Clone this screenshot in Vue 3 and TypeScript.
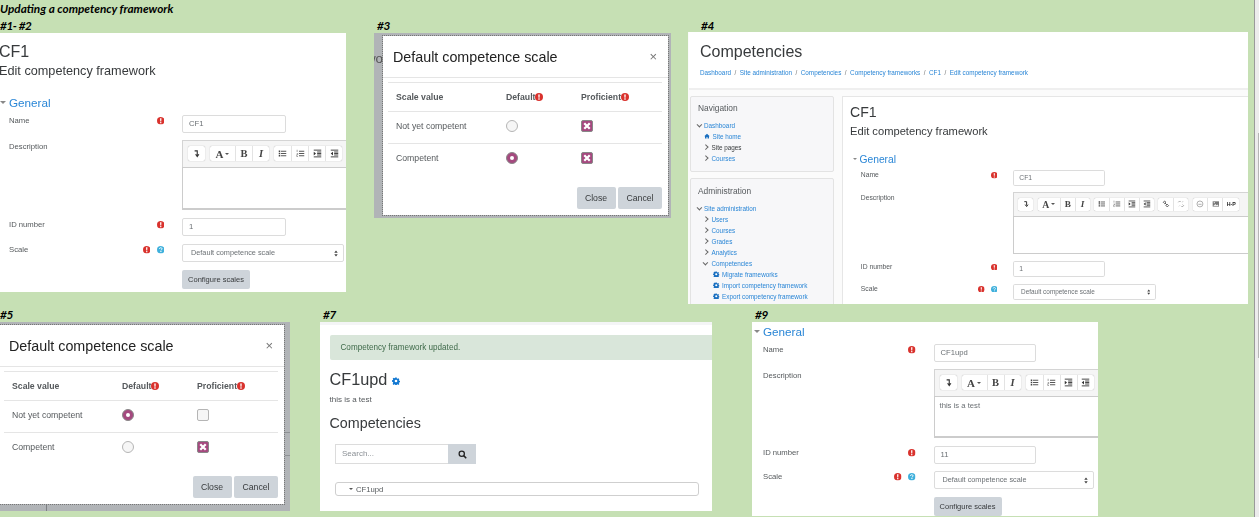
<template>
  <div class="sheet">
    <svg class="defs" width="0" height="0" aria-hidden="true">
      <symbol id="req" viewBox="0 0 16 16">
        <circle cx="8" cy="8" r="8" fill="#d9322d" />
        <path d="M6.5 2.8h3l-.4 6.6H6.9zM6.7 10.7h2.6v2.6H6.7z" fill="#fff" />
      </symbol>
      <symbol id="help" viewBox="0 0 16 16">
        <circle cx="8" cy="8" r="8" fill="#3fb0dc" />
        <path d="M5.2 6.2C5.4 4.4 6.6 3.6 8 3.6c1.6 0 2.8 1 2.8 2.4 0 2-2.4 2-2.4 3.6" fill="none" stroke="#fff" stroke-width="1.9" />
        <path d="M7.1 10.8h2.4v2.2H7.1z" fill="#fff" />
      </symbol>
      <symbol id="gear" viewBox="0 0 16 16">
        <path d="M6.6 1h2.8l.4 2 1.2.5 1.7-1.1 2 2-1.1 1.7.5 1.2 2 .4v2.8l-2 .4-.5 1.2 1.1 1.7-2 2-1.7-1.1-1.2.5-.4 2H6.6l-.4-2-1.2-.5-1.7 1.1-2-2L2.4 11l-.5-1.2-2-.4V6.6l2-.4.5-1.2-1.1-1.7 2-2L4.5 2.4 5.7 1.9z" fill="currentColor" />
        <circle cx="8" cy="8" r="2.6" fill="#fff" />
      </symbol>
      <symbol id="collapse" viewBox="0 0 12 12">
        <path d="M3.5 2.5h3.500v6M4.800 7L7 10 9.200 7" fill="none" stroke="#333" stroke-width="1.5" />
      </symbol>
      <symbol id="ul" viewBox="0 0 12 12">
        <path d="M1 2h2v2H1zM1 5h2v2H1zM1 8h2v2H1z" fill="#444" />
        <path d="M4 3h7M4 6h7M4 9h7" stroke="#444" stroke-width="1.2" />
      </symbol>
      <symbol id="ol" viewBox="0 0 12 12">
        <path d="M1.5 1v3M1 6h1.4v1.5H1V10h1.6" fill="none" stroke="#555" stroke-width=".7" />
        <path d="M4 3h7M4 6h7M4 9h7" stroke="#444" stroke-width="1.2" />
      </symbol>
      <symbol id="indent" viewBox="0 0 12 12">
        <path d="M1 1.5h10M1 10.5h10M5.5 4h5.5M5.5 6h5.5M5.5 8h5.5" stroke="#333" stroke-width="1.2" />
        <path d="M1 3.5L4 6 1 8.5z" fill="#333" />
      </symbol>
      <symbol id="outdent" viewBox="0 0 12 12">
        <path d="M1 1.5h10M1 10.5h10M5.5 4h5.5M5.5 6h5.5M5.5 8h5.5" stroke="#333" stroke-width="1.2" />
        <path d="M4 3.5L1 6 4 8.5z" fill="#333" />
      </symbol>
      <symbol id="link" viewBox="0 0 12 12">
        <path d="M2 3.5L4 1.5 6 3.5 4 5.5zM6 8.5L8 6.5 10 8.5 8 10.5zM4.5 4.5L7.5 7.5" fill="none" stroke="#555" stroke-width="1.4" />
      </symbol>
      <symbol id="unlink" viewBox="0 0 12 12">
        <path d="M2 3.5L4 1.5 5.5 3M6.5 9L8 10.5 10 8.5 8.5 7" fill="none" stroke="#999" stroke-width="1.3" />
        <path d="M9 2L8 3.5M3 9.5L4 8.5" stroke="#999" />
      </symbol>
      <symbol id="emoji" viewBox="0 0 12 12">
        <circle cx="6" cy="6" r="4.5" fill="none" stroke="#888" />
        <path d="M3.5 6.5h5" stroke="#888" />
      </symbol>
      <symbol id="image" viewBox="0 0 12 12">
        <path d="M1 2h10v8H1z" fill="#777" />
        <path d="M2 9l3-3 2 2 1.5-1 1.5 2z" fill="#eee" />
        <circle cx="3.5" cy="4" r="1" fill="#eee" />
      </symbol>
      <symbol id="search" viewBox="0 0 12 12">
        <circle cx="5" cy="5" r="3.5" fill="none" stroke="#222" stroke-width="1.7" />
        <path d="M7.5 7.5L11 11" stroke="#222" stroke-width="2" />
      </symbol>
      <symbol id="updown" viewBox="0 0 6 10">
        <path d="M3 .5L5.6 4H.4zM3 9.5L.4 6h5.2z" fill="#444" />
      </symbol>
    </svg>

    <p class="tag title">Updating a competency framework</p>
    <p v-for="t in tags" :key="t.text" class="tag hash" :class="t.cls">{{ t.text }}</p>

    <section v-for="f in forms" :key="f.id" class="shot" :class="f.id">
      <template v-if="f.id === 'page'">
        <header class="page-head">
          <h1>Competencies</h1>
          <nav class="crumbs">
            <template v-for="(c, i) in crumbs" :key="c">
              <span v-if="i" class="sep">/</span><a>{{ c }}</a>
            </template>
          </nav>
        </header>
        <aside class="side">
          <div v-for="b in blocks" :key="b.title" class="block" :class="b.cls">
            <h4>{{ b.title }}</h4>
            <ul>
              <li v-for="it in b.items" :key="it.label" :class="'lv' + it.level">
                <svg v-if="it.icon === 'gear'" class="li-ico"><use href="#gear" /></svg>
                <svg v-else-if="it.icon === 'home'" class="li-ico" viewBox="0 0 12 12">
                  <path d="M6 1.5L.5 6.5H2V11H5V8H7V11H10V6.5H11.5z" fill="currentColor" />
                </svg>
                <span v-else class="chev" :class="{ open: it.icon === 'open' }"></span>
                <a :class="{ dark: it.dark }">{{ it.label }}</a>
              </li>
            </ul>
          </div>
        </aside>
      </template>

      <div class="main">
        <template v-if="f.head">
          <h2>CF1</h2>
          <h3>Edit competency framework</h3>
        </template>
        <div class="legend">General</div>
        <div class="row">
          <div class="lab">Name<span class="marks"><svg class="mark"><use href="#req" /></svg></span></div>
          <div class="input">{{ f.name }}</div>
        </div>
        <div class="row desc">
          <div class="lab">Description</div>
          <div class="editor">
            <div class="toolbar">
              <div class="group"><span class="tb"><svg class="ic"><use href="#collapse" /></svg></span></div>
              <div class="group">
                <span class="tb wide">A<i class="drop"></i></span>
                <span class="tb serif">B</span>
                <span class="tb serif it">I</span>
              </div>
              <div class="group">
                <span v-for="n in ['ul', 'ol', 'indent', 'outdent']" :key="n" class="tb">
                  <svg class="ic"><use :href="'#' + n" /></svg>
                </span>
              </div>
              <template v-if="f.extra">
                <div class="group">
                  <span v-for="n in ['link', 'unlink']" :key="n" class="tb">
                    <svg class="ic"><use :href="'#' + n" /></svg>
                  </span>
                </div>
                <div class="group">
                  <span v-for="n in ['emoji', 'image']" :key="n" class="tb">
                    <svg class="ic"><use :href="'#' + n" /></svg>
                  </span>
                  <span class="tb hp">H-P</span>
                </div>
              </template>
            </div>
            <div class="content">{{ f.desc }}</div>
          </div>
        </div>
        <div class="row idn">
          <div class="lab">ID number<span class="marks"><svg class="mark"><use href="#req" /></svg></span></div>
          <div class="input">{{ f.idnumber }}</div>
        </div>
        <div class="row scale">
          <div class="lab">Scale<span class="marks">
            <svg class="mark"><use href="#req" /></svg>
            <svg class="mark"><use href="#help" /></svg>
          </span></div>
          <div class="select">Default competence scale<svg class="updown"><use href="#updown" /></svg></div>
        </div>
        <div v-if="f.id !== 'page'" class="row conf">
          <div></div>
          <button class="btn">Configure scales</button>
        </div>
      </div>
    </section>

    <section v-for="d in dialogs" :key="d.id" class="shot backdrop" :class="d.id">
      <div v-if="d.id === 'dlg3'" class="behind">wo</div>
      <div class="dialog">
        <div class="dlg-head">
          <h5>Default competence scale</h5>
          <span class="close">×</span>
        </div>
        <div class="tbl">
          <div class="tr th">
            <span>Scale value</span>
            <span>Default<svg class="mark"><use href="#req" /></svg></span>
            <span>Proficient<svg class="mark"><use href="#req" /></svg></span>
          </div>
          <div v-for="r in d.rows" :key="r.label" class="tr">
            <span>{{ r.label }}</span>
            <span><i class="radio" :class="{ on: r.def }"></i></span>
            <span>
              <i class="check" :class="{ on: r.prof }">
                <svg v-if="r.prof" viewBox="0 0 8 8"><path d="M1.8 1.8L6.2 6.2M6.2 1.8L1.8 6.2" stroke="#fff" stroke-width="1.8" /></svg>
              </i>
            </span>
          </div>
        </div>
        <div class="dlg-foot">
          <button class="btn big">Close</button>
          <button class="btn big">Cancel</button>
        </div>
      </div>
    </section>

    <section class="shot updated">
      <div class="strip"></div>
      <div class="alert">Competency framework updated.</div>
      <div class="fw-name">CF1upd <svg class="gear"><use href="#gear" /></svg></div>
      <p class="fw-desc">this is a test</p>
      <div class="fw-sub">Competencies</div>
      <div class="search">
        <div class="search-in">Search...</div>
        <div class="search-btn"><svg class="ic"><use href="#search" /></svg></div>
      </div>
      <div class="tree"><i class="drop"></i>CF1upd</div>
    </section>

    <div class="scrollbar"><div class="thumb"></div></div>
  </div>
</template>

<script setup lang="ts">
type Icon = 'open' | 'closed' | 'gear' | 'home';

interface NavItem {
  label: string;
  level: number;
  icon: Icon;
  dark?: boolean;
}

const tags = [
  { text: '#1- #2', cls: 't1' },
  { text: '#3', cls: 't3' },
  { text: '#4', cls: 't4' },
  { text: '#5', cls: 't5' },
  { text: '#7', cls: 't7' },
  { text: '#9', cls: 't9' },
];

const forms = [
  { id: 'first', head: true, extra: false, name: 'CF1', desc: '', idnumber: '1' },
  { id: 'page', head: true, extra: true, name: 'CF1', desc: '', idnumber: '1' },
  { id: 'last', head: false, extra: false, name: 'CF1upd', desc: 'this is a test', idnumber: '11' },
];

const crumbs = [
  'Dashboard',
  'Site administration',
  'Competencies',
  'Competency frameworks',
  'CF1',
  'Edit competency framework',
];

const blocks: { title: string; cls: string; items: NavItem[] }[] = [
  {
    title: 'Navigation',
    cls: 'nav-block',
    items: [
      { label: 'Dashboard', level: 0, icon: 'open' },
      { label: 'Site home', level: 1, icon: 'home' },
      { label: 'Site pages', level: 1, icon: 'closed', dark: true },
      { label: 'Courses', level: 1, icon: 'closed' },
    ],
  },
  {
    title: 'Administration',
    cls: 'admin-block',
    items: [
      { label: 'Site administration', level: 0, icon: 'open' },
      { label: 'Users', level: 1, icon: 'closed' },
      { label: 'Courses', level: 1, icon: 'closed' },
      { label: 'Grades', level: 1, icon: 'closed' },
      { label: 'Analytics', level: 1, icon: 'closed' },
      { label: 'Competencies', level: 1, icon: 'open' },
      { label: 'Migrate frameworks', level: 2, icon: 'gear' },
      { label: 'Import competency framework', level: 2, icon: 'gear' },
      { label: 'Export competency framework', level: 2, icon: 'gear' },
    ],
  },
];

const dialogs = [
  {
    id: 'dlg3',
    rows: [
      { label: 'Not yet competent', def: false, prof: true },
      { label: 'Competent', def: true, prof: true },
    ],
  },
  {
    id: 'dlg5',
    rows: [
      { label: 'Not yet competent', def: true, prof: false },
      { label: 'Competent', def: false, prof: true },
    ],
  },
];
</script>

<style>
html,
body {
  margin: 0;
  background: #c6e0b4;
}
</style>

<style scoped>
.sheet {
  position: relative;
  width: 1259px;
  height: 517px;
  overflow: hidden;
  background: #c6e0b4;
  font-family: "Liberation Sans", Arial, sans-serif;
  color: #55595c;
}
.defs {
  position: absolute;
}

/* collage captions */
.tag {
  position: absolute;
  margin: 0;
  font: italic 700 11.75px/14px Lato, sans-serif;
  color: #000;
  white-space: nowrap;
}
.hash { letter-spacing: -0.4px; }
.title { left: 0; top: 2px; }
.t1 { left: 0; top: 19px; }
.t3 { left: 377px; top: 19px; }
.t4 { left: 701px; top: 19px; }
.t5 { left: 0; top: 308px; }
.t7 { left: 323px; top: 308px; }
.t9 { left: 755px; top: 308px; }

/* each pasted screenshot sits at its own place on the sheet */
.shot {
  position: absolute;
  overflow: hidden;
  background: #fff;
  filter: blur(0.3px);
}
.first { left: 0; top: 33px; width: 346px; height: 259px; }
.page { left: 688px; top: 32px; width: 560px; height: 272px; }
.last { left: 752px; top: 322px; width: 346px; height: 194px; }
.dlg3 { left: 374px; top: 33px; width: 297px; height: 185px; }
.dlg5 { left: 0; top: 322px; width: 290px; height: 189px; }
.updated { left: 320px; top: 322px; width: 392px; height: 189px; }

.scrollbar {
  position: absolute;
  right: 0;
  top: 0;
  width: 4px;
  height: 517px;
  background: #ececec;
  border-left: 1px solid #9a9a9a;
}
.thumb {
  width: 1px;
  height: 225px;
  margin: 133px 0 0 3px;
  background: #b5b5b5;
}

/* form */
.main {
  --lx: 9px;
  --link: #2a86d6;
  padding-top: 10px;
}
.last .main {
  --lx: 11px;
  padding-top: 2px;
}
h2,
h3 {
  margin: 0;
  font-weight: 400;
  color: #373a3c;
  white-space: nowrap;
}
h2 {
  margin-left: -1px;
  font-size: 16px;
  line-height: 18px;
}
h3 {
  margin: 2px 0 0 -1px;
  font-size: 12.7px;
  line-height: 16px;
}
.legend {
  display: flex;
  align-items: center;
  gap: 3px;
  height: 14px;
  margin-top: 16px;
  padding-left: calc(var(--lx) - 9px);
  font-size: 11.7px;
  color: var(--link);
}
.last .legend {
  margin-top: 0;
}
.legend::before {
  content: "";
  border: 3px solid transparent;
  border-top: 3px solid #888;
  border-bottom: 0;
}
.row {
  display: grid;
  grid-template-columns: calc(182px - var(--lx)) 1fr;
  padding-left: var(--lx);
  margin-top: 6px;
}
.last .row {
  grid-template-columns: calc(181.5px - var(--lx)) 1fr;
}
.desc { margin-top: 7px; }
.idn,
.scale,
.conf { margin-top: 8px; }
.last .scale { margin-top: 7px; }
.lab {
  display: flex;
  justify-content: space-between;
  font-size: 7.7px;
  line-height: 10px;
  padding: 1px 18px 0 0;
}
.desc .lab,
.idn .lab {
  padding-top: 2px;
}
.marks {
  display: flex;
  gap: 6.5px;
  padding-top: 1px;
}
.mark {
  width: 7.5px;
  height: 7.5px;
  flex: none;
}
.input,
.select {
  box-sizing: border-box;
  height: 18px;
  border: 1px solid #dcdcdc;
  border-radius: 2px;
  font-size: 7.7px;
  line-height: 16px;
  color: #6b7074;
  white-space: nowrap;
}
.input {
  width: 104px;
  padding-left: 6px;
}
.last .input {
  width: 102px;
}
.select {
  display: flex;
  align-items: center;
  justify-content: space-between;
  width: 162px;
  padding: 0 5px 0 8px;
  font-size: 7.3px;
}
.last .select {
  width: 160px;
}
.updown {
  width: 4px;
  height: 7px;
}
.editor {
  width: 175px;
  border: 1px solid #d4d4d4;
  border-right: 0;
  box-sizing: border-box;
  height: 70px;
  display: flex;
  flex-direction: column;
  background: #f5f5f5;
}
.last .editor {
  height: 69px;
}
.toolbar {
  display: flex;
  gap: 5px;
  height: 26px;
  padding: 5px 0 0 5px;
  box-sizing: border-box;
  flex: none;
}
.group {
  display: flex;
  height: 15px;
  background: #fff;
  border-radius: 2px;
  box-shadow: 0 0 1px #999;
  flex: none;
}
.tb {
  display: flex;
  align-items: center;
  justify-content: center;
  width: 17px;
  height: 15px;
  border-left: 1px solid #e3e3e3;
  box-sizing: border-box;
  color: #444;
  font-size: 9px;
}
.tb:first-child {
  border-left: 0;
}
.wide {
  width: 25px;
  gap: 2px;
  font: 700 11px "Liberation Serif", serif;
}
.serif {
  font: 700 10.5px "Liberation Serif", serif;
}
.it {
  font-style: italic;
}
.hp {
  font: 700 6px "Liberation Sans", sans-serif;
  color: #222;
  width: 19px;
}
.ic {
  width: 9px;
  height: 9px;
}
.drop {
  display: inline-block;
  border: 2.5px solid transparent;
  border-top: 2.5px solid #555;
  border-bottom: 0;
}
.content {
  flex: 1;
  background: #fff;
  border: 1px solid #ccc;
  border-right: 0;
  border-bottom-width: 2px;
  margin: 0 -1px -1px -1px;
  padding: 4px 5px;
  font-size: 7.7px;
  line-height: 10px;
  color: #6b7074;
}
.btn {
  border: 0;
  border-radius: 2px;
  background: #ced4da;
  color: #373a3c;
  font-family: "Liberation Sans", Arial, sans-serif;
  padding: 0;
}
.conf .btn {
  width: 68px;
  height: 19px;
  font-size: 7.5px;
}

/* the #4 full page is the same form at a smaller scale */
.page {
  display: grid;
  grid-template-columns: 153px 1fr;
  grid-template-rows: 58px 1fr;
  background: #fbfbfb;
  padding-left: 1px;
  box-sizing: border-box;
}
.page-head {
  grid-column: 1 / 3;
  background: #fff;
  border-bottom: 2px solid #efefef;
  padding-left: 11px;
  height: 58px;
  box-sizing: border-box;
}
.page-head h1 {
  margin: 10px 0 0;
  font-size: 16px;
  line-height: 20px;
  font-weight: 400;
  color: #373a3c;
}
.crumbs {
  margin-top: 7px;
  font-size: 6.35px;
  line-height: 8px;
  white-space: nowrap;
  color: #2a86d6;
}
.sep {
  margin: 0 3.5px;
  color: #777;
}
.side {
  display: flex;
  flex-direction: column;
  gap: 6px;
  padding: 6px 0 0 1px;
  width: 145px;
}
.block {
  box-sizing: border-box;
  width: 144px;
  flex: none;
  background: #f7f7f9;
  border: 1px solid #e3e3e3;
  border-radius: 2px;
  padding: 6px 0 0 7px;
}
.nav-block { height: 76px; }
.admin-block { height: 140px; padding-top: 7px; }
.block h4 {
  margin: 0 0 6.5px;
  font-size: 8.4px;
  line-height: 10px;
  font-weight: 400;
  color: #55595c;
}
.block ul {
  margin: 0;
  padding: 0;
  list-style: none;
}
.block li {
  display: flex;
  align-items: center;
  gap: 2.5px;
  height: 11px;
  font-size: 6.35px;
  color: #2a86d6;
  white-space: nowrap;
}
.lv0 { padding-left: 0; }
.lv1 { padding-left: 6px; }
.lv2 { padding-left: 15px; }
.lv0 .chev { margin-right: 0; }
.dark { color: #373a3c; }
.chev {
  width: 2.5px;
  height: 2.5px;
  margin: 0 1.5px 0 0;
  border-right: 1px solid #666;
  border-top: 1px solid #666;
  transform: rotate(45deg);
}
.chev.open {
  transform: rotate(135deg);
}
.li-ico {
  width: 6px;
  height: 6px;
  color: #1a6fc0;
}
.admin-block .li-ico {
  width: 6.5px;
  height: 6.5px;
}
.page .main {
  zoom: 0.88;
  background: #fff;
  border: 1px solid #e6e6e6;
  border-right: 0;
  margin-top: 6.5px;
  padding-top: 9.5px;
  padding-left: 8px;
  --lx: 12.2px;
}
.page .main h2,
.page .main h3 {
  margin-left: 0;
}
.page .main h3 {
  margin-top: 3.5px;
}
.page .main .row {
  grid-template-columns: 173px 1fr;
}
.page .main .editor {
  width: 290px;
}
.page .main .legend {
  margin-top: 16.8px;
}

/* dialogs */
.backdrop {
  display: flex;
  align-items: flex-start;
  background: #b1b4b7;
}
.dlg5 {
  background:
    linear-gradient(#8f9295, #8f9295) 285px 110px / 5px 1px no-repeat,
    linear-gradient(#8f9295, #8f9295) 285px 133px / 5px 1px no-repeat,
    linear-gradient(#7d8083, #7d8083) 46px 183px / 1px 6px no-repeat,
    #b1b4b7;
}
.behind {
  flex: none;
  width: 9px;
  height: 20px;
  margin-top: 16px;
  overflow: hidden;
  direction: rtl;
  font-size: 13.4px;
  line-height: 20px;
  color: #555;
}
.dialog {
  flex: none;
  box-sizing: border-box;
  width: 285px;
  height: 179px;
  margin-top: 3px;
  background: #fff;
  outline: 1px dotted #777;
}
.dlg5 .dialog {
  margin-left: -1px;
}
.dlg-head {
  display: flex;
  align-items: center;
  justify-content: space-between;
  height: 41px;
  padding: 0 11px 0 10px;
  border-bottom: 1px solid #e5e5e5;
}
.dlg-head h5 {
  margin: 0;
  font-size: 14.3px;
  font-weight: 400;
  color: #222;
}
.close {
  font-size: 13px;
  color: #777;
}
.tbl {
  margin: 4px 6px 0 5px;
  border-top: 1px solid #e5e5e5;
}
.tr {
  display: grid;
  grid-template-columns: 110px 75px 1fr;
  align-items: center;
  height: 32px;
  padding: 0 0 4px 8px;
  box-sizing: border-box;
  border-bottom: 1px solid #e5e5e5;
  font-size: 8.7px;
  color: #55595c;
}
.tr:last-child {
  border-bottom: 0;
}
.th {
  height: 29px;
  padding-bottom: 0;
  font-weight: 700;
}
.th .mark {
  vertical-align: -1px;
  width: 8px;
  height: 8px;
}
.radio,
.check {
  display: block;
  box-sizing: border-box;
  width: 12px;
  height: 12px;
  border: 1px solid #b5b5b5;
  background: #f6f6f6;
}
.radio {
  border-radius: 50%;
}
.radio.on {
  background: #a5497f;
  border: 1px solid #888;
  position: relative;
}
.radio.on::after {
  content: "";
  position: absolute;
  left: 3px;
  top: 3px;
  width: 4px;
  height: 4px;
  border-radius: 50%;
  background: #fff;
}
.check {
  border-radius: 2px;
}
.check.on {
  background: #a5497f;
  border-color: #888;
}
.check svg {
  display: block;
  width: 10px;
  height: 10px;
}
.dlg-foot {
  display: flex;
  justify-content: flex-end;
  gap: 2.5px;
  margin: 11px 6px 0 0;
}
.big {
  height: 22px;
  width: 39px;
  font-size: 8.7px;
}
.big + .big {
  width: 44px;
}

/* #7 framework page */
.updated {
  padding-left: 9.5px;
  box-sizing: border-box;
}
.strip {
  height: 3px;
  margin-left: -9.5px;
  background: #f4f5f6;
}
.alert {
  height: 25px;
  margin-top: 10px;
  padding-left: 11px;
  border-radius: 2px 0 0 2px;
  background: #d9e6da;
  color: #3f6a4a;
  font-size: 8.15px;
  line-height: 25px;
}
.fw-name {
  display: flex;
  align-items: center;
  gap: 1px;
  height: 20px;
  margin-top: 9px;
  font-size: 16.3px;
  color: #373a3c;
}
.gear {
  width: 8px;
  height: 8px;
  color: #1177d1;
  margin: 3px 0 0 4px;
}
.fw-desc {
  margin: 6px 0 0;
  font-size: 8px;
  line-height: 10px;
}
.fw-sub {
  margin-top: 9px;
  font-size: 14.3px;
  line-height: 18px;
  color: #373a3c;
}
.search {
  display: flex;
  width: 141px;
  height: 20px;
  margin: 12px 0 0 5.5px;
}
.search-in {
  box-sizing: border-box;
  flex: 1;
  border: 1px solid #dcdcdc;
  border-right: 0;
  padding-left: 6px;
  font-size: 8px;
  line-height: 18px;
  color: #8b9095;
}
.search-btn {
  display: flex;
  align-items: center;
  justify-content: center;
  width: 28px;
  background: #ced4da;
}
.tree {
  box-sizing: border-box;
  display: flex;
  align-items: center;
  gap: 3px;
  width: 364px;
  height: 14px;
  margin: 18px 0 0 5.5px;
  padding-left: 13px;
  border: 1px solid #cfcfcf;
  border-radius: 3px;
  font-size: 7.7px;
  color: #55595c;
}
</style>
